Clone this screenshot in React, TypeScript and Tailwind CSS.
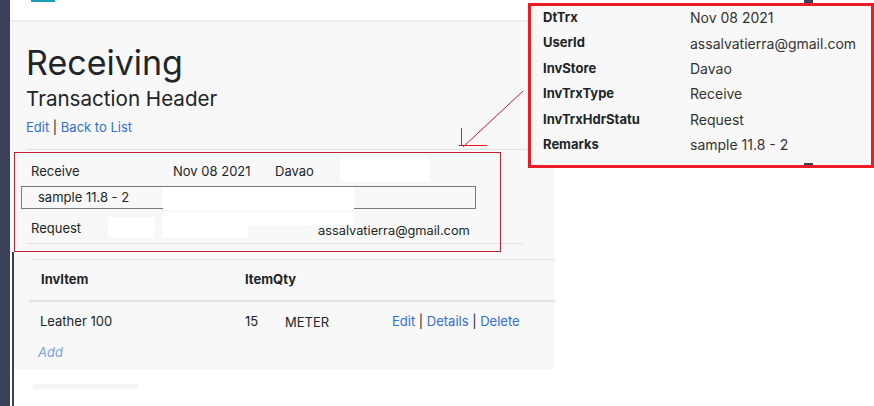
const details = [
  ["DtTrx", "Nov 08 2021"],
  ["UserId", "assalvatierra@gmail.com"],
  ["InvStore", "Davao"],
  ["InvTrxType", "Receive"],
  ["InvTrxHdrStatu", "Request"],
  ["Remarks", "sample 11.8 - 2"],
];

// white blocks that hide parts of the captured page
const patches = [
  "left-[340px] top-[156px] w-[89px] h-[26px]",
  "left-[163px] top-[187px] w-[191px] h-[23px]",
  "left-[163px] top-[212px] w-[142px] h-[14px]",
  "left-[163px] top-[226px] w-[85px] h-[12px]",
  "left-[108px] top-[217px] w-[47px] h-[21px]",
  "left-[302px] top-[212px] w-[51px] h-[13px]",
];

export default function App() {
  return (
    <div className="relative flex h-[406px] w-[874px] overflow-hidden bg-white font-[Inter,'Noto_Sans',sans-serif] text-[#212529]">
      <aside className="w-[10px] shrink-0 bg-[#3b4159]" />

      <div className="flex flex-1 flex-col">
        <header className="relative z-10 h-[20px] shrink-0 bg-white shadow-[0_1px_2px_rgba(0,0,0,0.08)]">
          <div className="ml-[21px] h-[2px] w-[24px] bg-[#17a2b8]" />
        </header>

        <div className="flex flex-1">
          <div className="flex w-[545px] shrink-0 flex-col">
            <section className="bg-[#f8f8f8] pt-[23px]">
              <h1 className="pl-4 text-[34px] leading-[40px] font-normal">Receiving</h1>
              <h2 className="mt-[4px] pl-4 text-[20.6px] leading-[24px]">Transaction Header</h2>
              <div className="mt-[6px] pl-4 text-[13px] leading-[20px]">
                <span className="text-[#2f6fdc]">Edit</span> | <span className="text-[#2f6fdc]">Back to List</span>
              </div>
              <div className="ml-4 mt-[12px] border-t border-[#e2e2e2]" />

              <div className="mt-[11px] flex h-[22px] items-center pl-[21px] text-[13px]">
                <span className="w-[142px]">Receive</span>
                <span className="w-[102px]">Nov 08 2021</span>
                <span>Davao</span>
              </div>
              <div className="ml-[11px] mt-[3px] flex h-[23px] w-[455px] items-center border border-[#7a7a7a] pl-[16px] text-[13px]">
                sample 11.8 - 2
              </div>
              <div className="mt-[9px] flex h-[22px] items-center pl-[21px] text-[13px]">
                <span className="w-[287px]">Request</span>
                <span className="pt-[4px] text-[12.8px]">assalvatierra@gmail.com</span>
              </div>
              <div className="ml-4 mt-[3px] w-[497px] border-t border-[#e2e2e2]" />
              <div className="h-[8px]" />
            </section>

            <section className="ml-[2px] flex flex-1 flex-col border-l-2 border-[#3b4159]">
              <div className="bg-[#f8f8f8] pb-[4px]">
                <div className="ml-[17px] mt-[7px] border-t border-[#e2e2e2]" />
                <div className="ml-[15px] flex h-[40px] items-center text-[13px] font-bold">
                  <span className="w-[216px] pl-[12px]">InvItem</span>
                  <span>ItemQty</span>
                </div>
                <div className="ml-[15px] border-t-2 border-[#dee2e6]" />
                <div className="ml-[15px] flex h-[39px] items-center text-[13px]">
                  <span className="w-[216px] pl-[11px]">Leather 100</span>
                  <span className="w-[40px]">15</span>
                  <span className="w-[107px] pt-[2px]">METER</span>
                  <span>
                    <span className="text-[#2f6fdc]">Edit</span> | <span className="text-[#2f6fdc]">Details</span> |{" "}
                    <span className="text-[#2f6fdc]">Delete</span>
                  </span>
                </div>
                <div className="flex h-[24px] items-center pl-[24px] text-[13px] italic text-[#7d9fe0]">Add</div>
              </div>
              <div className="ml-[19px] mt-[15px] h-[5px] w-[105px] bg-[#f5f5f5]" />
            </section>
          </div>

          <div className="flex flex-1 flex-col">
            <div className="h-[148px] bg-[#f8f8f8]" />
          </div>
        </div>
      </div>

      {/* annotations drawn over the page */}
      {patches.map((p) => (
        <div key={p} className={`absolute z-20 bg-white ${p}`} />
      ))}
      <div className="absolute left-[14px] top-[152px] z-20 h-[100px] w-[487px] border border-[#c4212e]" />

      <svg className="pointer-events-none absolute left-0 top-0 z-20" width="874" height="406" viewBox="0 0 874 406">
        <g stroke="#e8141c" strokeWidth="1" fill="none">
          <line x1="523" y1="91" x2="463" y2="147" />
          <line x1="461.5" y1="128" x2="461.5" y2="146" />
          <line x1="459" y1="145.5" x2="487" y2="145.5" />
        </g>
      </svg>

      <div className="absolute left-[528px] top-[3px] z-30 h-[165px] w-[346px] border-[3px] border-[#ed1c24] bg-[#f8f8f8] pl-[12px]">
        <div className="-mt-[1px]">
          {details.map(([k, v]) => (
            <div key={k} className="flex h-[25.4px] items-center text-[13px]">
              <span className="w-[147px] font-bold">{k}</span>
              <span className="text-[14px] text-[#333]">{v}</span>
            </div>
          ))}
        </div>
      </div>
      <div className="absolute left-[804px] top-0 z-30 h-[3px] w-[9px] bg-[#3b4159]" />
      <div className="absolute left-[804px] top-[163px] z-30 h-[2px] w-[9px] bg-[#3b4159]" />
    </div>
  );
}
